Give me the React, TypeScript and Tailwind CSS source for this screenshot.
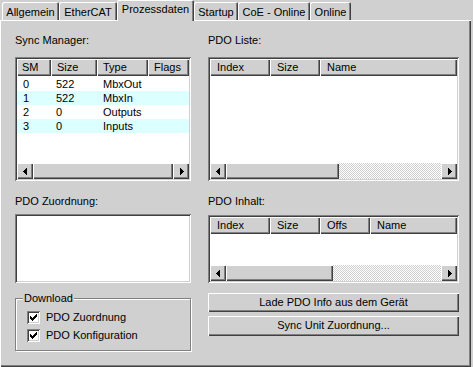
import React from 'react';

// classic 3D bevels
const raised = 'bg-[#d0d0d0] shadow-[inset_1px_1px_0_#ffffff,inset_-1px_-1px_0_#404040,inset_-2px_-2px_0_#808080]';
const sunken = 'p-[2px] shadow-[inset_1px_1px_0_#808080,inset_-1px_-1px_0_#ffffff,inset_2px_2px_0_#404040,inset_-2px_-2px_0_#d0d0d0]';

type Col = { label: string; w: string; pl?: string };

const Arrow = ({ dir }: { dir: 'left' | 'right' }) => (
  <svg width="4" height="7" viewBox="0 0 4 7" shapeRendering="crispEdges" className={dir === 'right' ? 'rotate-180' : ''}>
    <rect x="0" y="3" width="1" height="1" />
    <rect x="1" y="2" width="1" height="3" />
    <rect x="2" y="1" width="1" height="5" />
    <rect x="3" y="0" width="1" height="7" />
  </svg>
);

const Check = () => (
  <svg width="7" height="7" viewBox="0 0 7 7" shapeRendering="crispEdges">
    <rect x="0" y="2" width="1" height="3" />
    <rect x="1" y="3" width="1" height="3" />
    <rect x="2" y="4" width="1" height="3" />
    <rect x="3" y="3" width="1" height="3" />
    <rect x="4" y="2" width="1" height="3" />
    <rect x="5" y="1" width="1" height="3" />
    <rect x="6" y="0" width="1" height="3" />
  </svg>
);

const ScrollBar = ({ thumb }: { thumb: string }) => (
  <div className="flex h-[16px] shrink-0">
    <div className={`flex w-[16px] items-center justify-center pr-[1px] ${raised}`}>
      <Arrow dir="left" />
    </div>
    <div className="flex flex-1 bg-[conic-gradient(#d0d0d0_25%,#ffffff_0_50%,#d0d0d0_0_75%,#ffffff_0)] bg-size-[2px_2px]">
      <div className={`${thumb} ${raised}`} />
    </div>
    <div className={`flex w-[16px] items-center justify-center pl-[1px] ${raised}`}>
      <Arrow dir="right" />
    </div>
  </div>
);

const Header = ({ cols }: { cols: Col[] }) => (
  <div className="flex h-[17px] shrink-0">
    {cols.map((c) => (
      <div key={c.label} className={`${c.w} ${raised} flex items-center ${c.pl ?? 'pl-[6px]'} pb-[1px]`}>
        {c.label}
      </div>
    ))}
  </div>
);

const smCols: Col[] = [
  { label: 'SM', w: 'w-[34px]', pl: 'pl-[5px]' },
  { label: 'Size', w: 'w-[46px]' },
  { label: 'Type', w: 'w-[51px]' },
  { label: 'Flags', w: 'flex-1' },
];

const smRows = [
  ['0', '522', 'MbxOut', ''],
  ['1', '522', 'MbxIn', ''],
  ['2', '0', 'Outputs', ''],
  ['3', '0', 'Inputs', ''],
];

const Checkbox = ({ label }: { label: string }) => (
  <div className="flex items-center gap-[6px]">
    <div className="flex h-[13px] w-[13px] items-start justify-start bg-white pl-[3px] pt-[3px] shadow-[inset_1px_1px_0_#808080,inset_-1px_-1px_0_#ffffff,inset_2px_2px_0_#404040,inset_-2px_-2px_0_#d0d0d0]">
      <Check />
    </div>
    <span>{label}</span>
  </div>
);

const Tab = ({ label, w, active }: { label: string; w: string; active?: boolean }) =>
  active ? (
    <div className={`relative z-10 h-[21px] ${w} rounded-t-[2px] bg-[#d0d0d0] pt-[3px] text-center shadow-[inset_1px_1px_0_#ffffff,inset_-1px_0_0_#404040,inset_-2px_0_0_#808080]`}>
      {label}
    </div>
  ) : (
    <div className={`mt-[2px] h-[18px] ${w} rounded-t-[2px] bg-[#d0d0d0] pt-[4px] text-center shadow-[inset_1px_1px_0_#ffffff,inset_-1px_0_0_#404040,inset_-2px_0_0_#808080]`}>
      {label}
    </div>
  );

export default function App() {
  return (
    <div className="h-[367px] w-[473px] overflow-hidden bg-[#d0d0d0] font-['Liberation_Sans',Arial,sans-serif] text-[11px] leading-[13px] text-black">
      {/* Tabs */}
      <div className="flex h-[20px] items-start pl-[2px]">
        <Tab label="Allgemein" w="w-[57px]" />
        <Tab label="EtherCAT" w="w-[58px]" />
        <Tab label="Prozessdaten" w="w-[77px]" active />
        <Tab label="Startup" w="w-[44px]" />
        <Tab label="CoE - Online" w="w-[72px]" />
        <Tab label="Online" w="w-[41px]" />
      </div>

      {/* Panel */}
      <div className="flex h-[347px] w-[471px] gap-[17px] pl-[15px] pt-[14px] shadow-[inset_1px_1px_0_#ffffff,inset_-1px_-1px_0_#404040,inset_-2px_-2px_0_#808080]">
        {/* Left column */}
        <div className="flex w-[176px] flex-col">
          <div className="h-[13px]">Sync Manager:</div>
          <div className={`mt-[10px] flex h-[124px] flex-col bg-white ${sunken}`}>
            <Header cols={smCols} />
            <div className="h-[87px] pt-[1px]">
              {smRows.map((r, i) => (
                <div key={i} className={`flex h-[14px] items-center ${i % 2 === 1 ? 'bg-[#dcffff]' : ''}`}>
                  <div className="w-[34px] pl-[6px]">{r[0]}</div>
                  <div className="w-[46px] pl-[5px]">{r[1]}</div>
                  <div className="w-[51px] pl-[6px]">{r[2]}</div>
                  <div className="flex-1 pl-[6px]">{r[3]}</div>
                </div>
              ))}
            </div>
            <ScrollBar thumb="flex-1" />
          </div>

          <div className="mt-[14px] h-[13px]">PDO Zuordnung:</div>
          <div className={`mt-[6px] h-[69px] bg-white ${sunken}`} />

          <div className="relative mt-[15px] flex h-[53px] flex-col gap-[5px] border border-[#808080] pl-[11px] pt-[12px] shadow-[inset_1px_1px_0_#ffffff,1px_1px_0_#ffffff]">
            <span className="absolute left-[7px] top-[-7px] bg-[#d0d0d0] px-[1px]">Download</span>
            <Checkbox label="PDO Zuordnung" />
            <Checkbox label="PDO Konfiguration" />
          </div>
        </div>

        {/* Right column */}
        <div className="flex w-[251px] flex-col">
          <div className="h-[13px]">PDO Liste:</div>
          <div className={`mt-[10px] flex h-[124px] flex-col bg-white ${sunken}`}>
            <Header
              cols={[
                { label: 'Index', w: 'w-[60px]', pl: 'pl-[7px]' },
                { label: 'Size', w: 'w-[50px]', pl: 'pl-[7px]' },
                { label: 'Name', w: 'flex-1', pl: 'pl-[7px]' },
              ]}
            />
            <div className="flex-1" />
            <ScrollBar thumb="w-[113px]" />
          </div>

          <div className="mt-[14px] h-[13px]">PDO Inhalt:</div>
          <div className={`mt-[7px] flex h-[68px] flex-col bg-white ${sunken}`}>
            <Header
              cols={[
                { label: 'Index', w: 'w-[60px]', pl: 'pl-[7px]' },
                { label: 'Size', w: 'w-[50px]', pl: 'pl-[7px]' },
                { label: 'Offs', w: 'w-[50px]', pl: 'pl-[7px]' },
                { label: 'Name', w: 'flex-1', pl: 'pl-[7px]' },
              ]}
            />
            <div className="flex-1" />
            <ScrollBar thumb="w-[107px]" />
          </div>

          <button className={`mt-[10px] h-[19px] w-full pb-[1px] text-center ${raised}`}>Lade PDO Info aus dem Gerät</button>
          <button className={`mt-[4px] h-[20px] w-full pb-[1px] text-center ${raised}`}>Sync Unit Zuordnung...</button>
        </div>
      </div>
    </div>
  );
}
